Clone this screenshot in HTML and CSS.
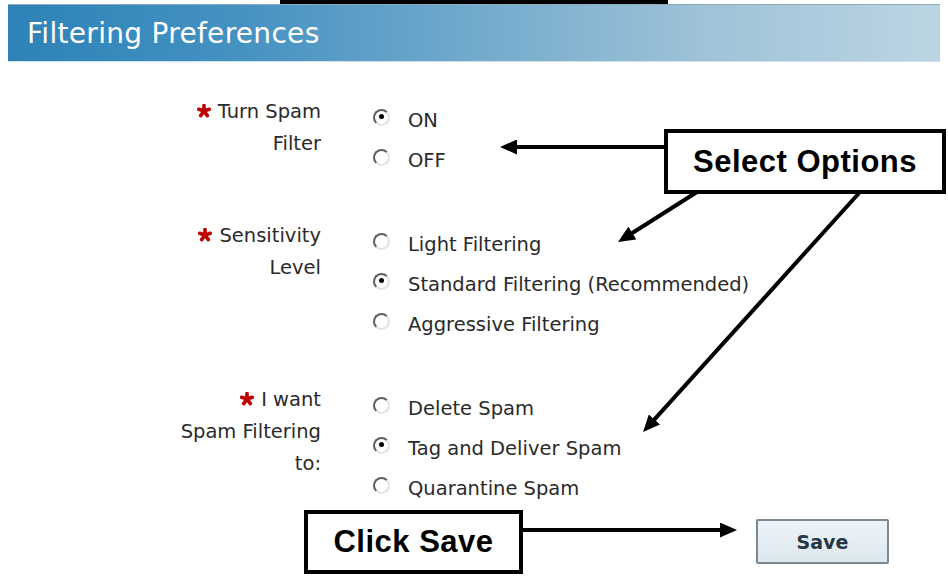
FILE: index.html
```html
<!DOCTYPE html>
<html lang="en">
<head>
  <meta charset="UTF-8">
  <title>Filtering Preferences</title>
  <link rel="stylesheet" href="styles.css">
</head>
<body>

  <div class="topstrip"></div>

  <header class="title-bar">
    <h1>Filtering Preferences</h1>
  </header>

  <form class="prefs">
    <div class="group">
      <div class="label"><svg class="req" width="14" height="14" viewBox="0 0 14 14"><path d="M7 7L7 1.5M7 7L12.3 5.3M7 7L10.3 11.6M7 7L3.7 11.6M7 7L1.7 5.3"/></svg>Turn Spam<br>Filter</div>
      <ul class="options">
        <li><span class="radio checked"></span>ON</li>
        <li><span class="radio"></span>OFF</li>
      </ul>
    </div>

    <div class="group">
      <div class="label"><svg class="req" width="14" height="14" viewBox="0 0 14 14"><path d="M7 7L7 1.5M7 7L12.3 5.3M7 7L10.3 11.6M7 7L3.7 11.6M7 7L1.7 5.3"/></svg>Sensitivity<br>Level</div>
      <ul class="options">
        <li><span class="radio"></span>Light Filtering</li>
        <li><span class="radio checked"></span>Standard Filtering (Recommended)</li>
        <li><span class="radio"></span>Aggressive Filtering</li>
      </ul>
    </div>

    <div class="group">
      <div class="label"><svg class="req" width="14" height="14" viewBox="0 0 14 14"><path d="M7 7L7 1.5M7 7L12.3 5.3M7 7L10.3 11.6M7 7L3.7 11.6M7 7L1.7 5.3"/></svg>I want<br>Spam Filtering<br>to:</div>
      <ul class="options">
        <li><span class="radio"></span>Delete Spam</li>
        <li><span class="radio checked"></span>Tag and Deliver Spam</li>
        <li><span class="radio"></span>Quarantine Spam</li>
      </ul>
    </div>

    <div class="actions">
      <button type="button" class="save">Save</button>
    </div>
  </form>

  <!-- annotations drawn over the screenshot -->
  <div class="callout callout-select">Select Options</div>
  <div class="callout callout-save">Click Save</div>

  <svg class="arrows" width="948" height="577" viewBox="0 0 948 577">
    <defs>
      <marker id="head" markerUnits="userSpaceOnUse" markerWidth="17" markerHeight="15" refX="9" refY="7.5" orient="auto">
        <path d="M0,0 L17,7.5 L0,15 Z" fill="#000"/>
      </marker>
    </defs>
    <line x1="664" y1="147" x2="508" y2="147" marker-end="url(#head)"/>
    <line x1="697" y1="192" x2="624.8" y2="237.8" marker-end="url(#head)"/>
    <line x1="860" y1="192" x2="648.4" y2="426.1" marker-end="url(#head)"/>
    <line x1="523" y1="530" x2="729" y2="530" marker-end="url(#head)"/>
  </svg>

</body>
</html>
```

FILE: styles.css
```css
body {
  margin: 0;
  padding: 0;
  background: #fff;
  font-family: "DejaVu Sans", Verdana, sans-serif;
  width: 948px;
  height: 577px;
  overflow: hidden;
  position: relative;
}

.topstrip {
  margin-left: 280px;
  width: 388px;
  height: 4px;
  background: #000;
}

.title-bar {
  margin: 0 8px;
  height: 56px;
  border-top: 1px solid #8eaabd;
  border-bottom: 1px solid #cfe0ea;
  background: linear-gradient(to right, #2d82b7 0%, #4592c2 25%, #72aacc 50%, #9fc3d8 75%, #bcd5e2 100%);
  display: flex;
  align-items: center;
}

.title-bar h1 {
  margin: 0 0 0 19px;
  font-weight: normal;
  font-size: 28px;
  color: #fff;
  letter-spacing: 0.3px;
}

.prefs {
  margin-top: 34px;
  display: flex;
  flex-direction: column;
  gap: 40px;
}

.group {
  display: grid;
  grid-template-columns: 321px auto;
  column-gap: 52px;
  align-items: start;
}

.label {
  text-align: right;
  font-size: 19.5px;
  line-height: 32px;
  color: #2a2a2a;
}

.req {
  vertical-align: middle;
  margin: -4px 7px 0 0;
}

.req path {
  stroke: #c00000;
  stroke-width: 3.6;
  stroke-linecap: round;
  fill: none;
}

.options {
  list-style: none;
  margin: 0;
  padding: 4px 0 0 0;
}

.options li {
  height: 40px;
  display: flex;
  align-items: center;
  font-size: 19.5px;
  color: #2a2a2a;
}

.radio {
  width: 17px;
  height: 17px;
  border-radius: 50%;
  box-sizing: border-box;
  border: 2.5px solid;
  border-color: #5f5f5f #e4e2dc #e4e2dc #5f5f5f;
  background: #fff;
  margin: -6px 18px 0 0;
  position: relative;
  flex: none;
}

.radio.checked::after {
  content: "";
  position: absolute;
  left: 3.5px;
  top: 3.5px;
  width: 5px;
  height: 5px;
  border-radius: 50%;
  background: #000;
}

.actions {
  margin-top: -29px;
  padding-left: 756px;
}

.save {
  width: 133px;
  height: 45px;
  border: 2px solid #7c8991;
  border-radius: 2px;
  background: linear-gradient(#eef4f9, #dce7ee);
  color: #263846;
  font-family: "DejaVu Sans", Verdana, sans-serif;
  font-weight: bold;
  font-size: 19px;
  cursor: pointer;
}

.callout {
  position: absolute;
  box-sizing: border-box;
  border: 4px solid #000;
  background: #fff;
  font-family: "Liberation Sans", Arial, sans-serif;
  font-weight: bold;
  font-size: 31px;
  letter-spacing: 0.5px;
  color: #000;
  display: flex;
  align-items: center;
  justify-content: center;
}

.callout-select {
  left: 664px;
  top: 129px;
  width: 282px;
  height: 65px;
}

.callout-save {
  left: 304px;
  top: 510px;
  width: 219px;
  height: 64px;
}

.arrows {
  position: absolute;
  left: 0;
  top: 0;
  pointer-events: none;
}

.arrows line {
  stroke: #000;
  stroke-width: 4;
}
```
